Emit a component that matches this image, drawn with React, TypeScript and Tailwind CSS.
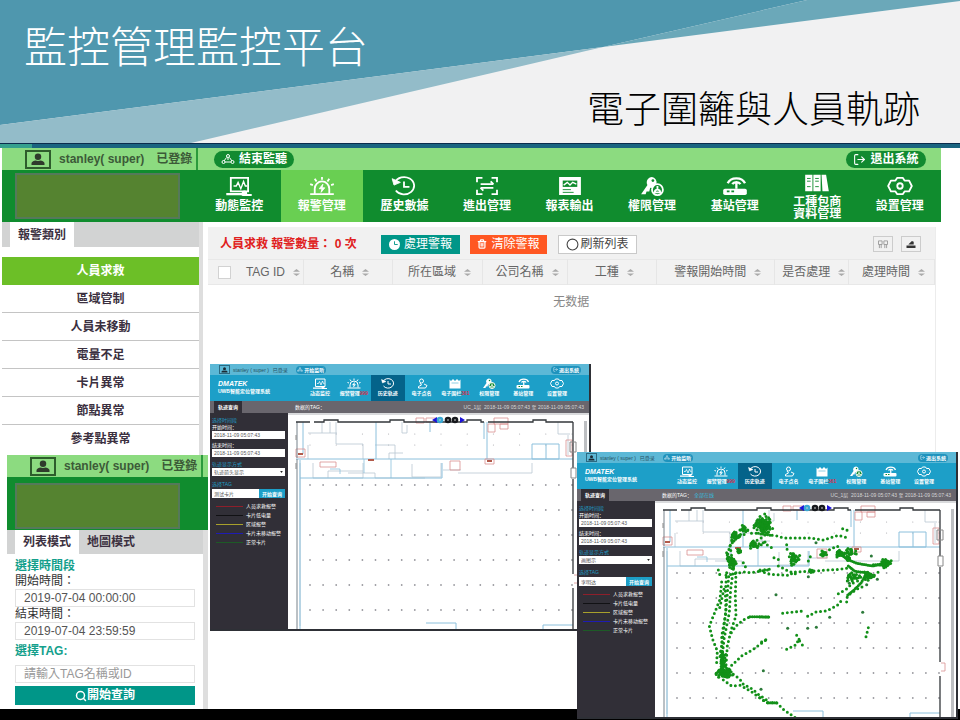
import React, { useId } from "react";
import { LogOut, Trash2, Search, Circle } from "lucide-react";

const FONT = "font-['Liberation_Sans','Noto_Sans_CJK_TC',sans-serif]";
const FONT_SC = "font-['Liberation_Sans','Noto_Sans_CJK_SC',sans-serif]";

type IconProps = { className?: string };

function Svg({ className, children }: IconProps & { children: React.ReactNode }) {
  return (
    <svg viewBox="0 0 28 22" className={className} fill="none" stroke="currentColor" strokeWidth="2" aria-hidden="true">
      {children}
    </svg>
  );
}

const MonitorIcon = ({ className }: IconProps) => (
  <Svg className={className}>
    <path d="M5 17V2h19v15z" />
    <path d="M8 11h3l2-4 3 7 3-8 2 5h2" strokeWidth="1.5" />
    <path d="M0 20h17l2 1h9" strokeWidth="2.5" />
    <circle cx="20" cy="19" r="2" fill="currentColor" />
  </Svg>
);
const AlarmIcon = ({ className }: IconProps) => (
  <Svg className={className}>
    <path d="M1 20h26M6 19v-5a8 8 0 0 1 16 0v5M14 1v3M6 3l2 3M22 3l-2 3M1 9l3 1M27 9l-3 1" />
    <path d="M15 9l-4 5h3l-1 4 4-5h-3z" fill="currentColor" strokeWidth="1" />
  </Svg>
);
const HistoryIcon = ({ className }: IconProps) => (
  <Svg className={className}>
    <path d="M4 7a11 9.500 0 1 1 1 9" />
    <path d="M1 3l2 7 7-3z" fill="currentColor" strokeWidth="1" />
    <path d="M14 6v6h6" />
  </Svg>
);
const ScanIcon = ({ className }: IconProps) => (
  <Svg className={className}>
    <path d="M3 7V2h6M19 2h6v5M25 15v5h-6M9 20H3v-5M7 9h14M7 13h14" />
    <path d="M18 6l3 3M10 16l-3-3" />
  </Svg>
);
const ReportIcon = ({ className }: IconProps) => (
  <Svg className={className}>
    <path d="M3 2h22v18H3z" fill="currentColor" />
    <path d="M6 5h16v7H6z" fill="#108c2e" stroke="none" />
    <path d="M7 10l4-3 3 3 3-3 4 2" strokeWidth="1.5" />
    <path d="M6 15h9M6 18h12" stroke="#108c2e" strokeWidth="1" />
  </Svg>
);
const KeyIcon = ({ className }: IconProps) => (
  <Svg className={className}>
    <path d="M14 1a6 6 0 0 0-5 9l-7 10h5l1-3h3l1-4a6 6 0 1 0 2-12z" fill="currentColor" stroke="none" />
    <circle cx="15" cy="5" r="1.5" fill="#108c2e" stroke="none" />
    <circle cx="20" cy="15" r="6" fill="#108c2e" />
    <path d="M20 11v3M17 18c0-4 6-4 6 0z" />
  </Svg>
);
const RouterIcon = ({ className }: IconProps) => (
  <Svg className={className}>
    <rect x="1" y="14" width="26" height="7" rx="2" fill="currentColor" stroke="none" />
    <path d="M6 8a10 8 0 0 1 19 0M11 9a5 4 0 0 1 9 0M15.500 8v6" strokeWidth="2.500" />
    <path d="M5 17h3M10 17h3" stroke="#108c2e" />
  </Svg>
);
const BooksIcon = ({ className }: IconProps) => (
  <Svg className={className}>
    <path d="M1 2h8v18H1zM10 2h8v18h-8zM19 2h5l3 18h-7z" fill="currentColor" stroke="none" />
    <path d="M3 6h4M3 9h4M3 15h4M12 6h4M12 9h4M12 15h4" stroke="#108c2e" strokeWidth="1" />
  </Svg>
);
const GearIcon = ({ className }: IconProps) => (
  <Svg className={className}>
    <path d="M11 2h6l2 3h5l3 6-3 6h-5l-2 3h-6l-2-3H4l-3-6 3-6h5z" strokeLinejoin="round" />
    <circle cx="14" cy="11" r="3" />
  </Svg>
);
const PersonIcon = ({ className }: IconProps) => (
  <Svg className={className}>
    <circle cx="13" cy="6" r="4" />
    <path d="M10 10l3 4-6 3v3h14l3-5-6-3" />
  </Svg>
);
const FenceIcon = ({ className }: IconProps) => (
  <Svg className={className}>
    <path d="M3 3l3 3 4-4 4 4 4-4 4 4 3-3v18H3z" fill="currentColor" stroke="none" />
    <path d="M7 10h14" stroke="#1d9cc4" strokeWidth="1" />
  </Svg>
);
const NodesIcon = ({ className }: IconProps) => (
  <Svg className={className}>
    <path d="M14 8v5M11 8l-5 7M17 8l5 7M8 17h12" />
    <circle cx="14" cy="5" r="3" />
    <circle cx="5" cy="17" r="3" />
    <circle cx="23" cy="17" r="3" />
  </Svg>
);
const AvatarIcon = ({ className }: IconProps) => (
  <svg viewBox="0 0 16 14" className={className} fill="currentColor" aria-hidden="true">
    <ellipse cx="8" cy="4" rx="3.500" ry="3.500" />
    <path d="M1 13v-2q0-2 4-3q3 1 6 0q4 1 4 3v2z" />
  </svg>
);

function UserBar() {
  return (
    <div className="flex h-full items-center whitespace-nowrap text-xs font-bold text-[#3c5a38]">
      <span className="flex h-[19px] w-[26px] items-center justify-center border-2 border-[#2e5d2c] text-[#2f3b2c]">
        <AvatarIcon className="h-[13px] w-4" />
      </span>
      <span className="ml-2">stanley( super)</span>
      <span className="ml-3">已登錄</span>
    </div>
  );
}

const NAV = [
  { icon: MonitorIcon, label: "動態監控" },
  { icon: AlarmIcon, label: "報警管理", active: true },
  { icon: HistoryIcon, label: "歷史數據" },
  { icon: ScanIcon, label: "進出管理" },
  { icon: ReportIcon, label: "報表輸出" },
  { icon: KeyIcon, label: "權限管理" },
  { icon: RouterIcon, label: "基站管理" },
  { icon: BooksIcon, label: "工種包商\n資料管理" },
  { icon: GearIcon, label: "設置管理" },
];

function Banner() {
  return (
    <header className="relative h-[143px] overflow-hidden bg-[#f1f1f2]">
      <svg viewBox="0 0 960 143" preserveAspectRatio="none" className="absolute inset-0 size-full" aria-hidden="true">
        <path d="M0 0H807L603 47L0 125z" fill="#4f97ae" />
        <path d="M0 125L603 47L191 143H0z" fill="#93bcc9" />
        <path d="M807 0H960V1L603 47z" fill="#6ba8b9" />
      </svg>
      <div className={`relative flex flex-col font-light ${FONT}`}>
        <h1 className="mt-[18px] ml-6 text-[43px] leading-[60px] text-white">監控管理監控平台</h1>
        <h2 className="mt-[7px] mr-10 text-right text-[37px] leading-[52px] text-black">電子圍籬與人員軌跡</h2>
      </div>
    </header>
  );
}

function TopBar() {
  return (
    <div>
      <div className="flex h-[22px] items-center bg-[#8cdb80] pr-[15px]">
        <div className="h-full w-[196px] border-r-2 border-[#2b9a3c] pl-[23px]">
          <UserBar />
        </div>
        <button type="button" className="ml-4 flex h-[17px] w-20 items-center justify-center gap-1 rounded-full bg-[#128a30] text-xs leading-none font-bold text-white">
          <NodesIcon className="h-3 w-[14px]" />
          結束監聽
        </button>
        <button type="button" className="ml-auto flex h-[17px] w-20 items-center justify-center gap-1 rounded-full bg-[#128a30] text-xs leading-none font-bold text-white">
          <LogOut className="size-[13px]" aria-hidden="true" />
          退出系統
        </button>
      </div>
      <nav className="flex h-[52px] bg-[#108c2e]">
        <div className="w-[196px] shrink-0 pt-[3px] pl-[13px]">
          <div className="h-[46px] w-[165px] border-2 border-[#55795a] bg-[#558330]" />
        </div>
        {NAV.map(({ icon: Icon, label, active }) => (
          <button
            key={label}
            type="button"
            className={`flex flex-1 flex-col items-center text-xs font-bold whitespace-pre text-white ${active ? "bg-[#69cf52]" : ""} ${
              label.includes("\n") ? "gap-[3px] pt-[3px] leading-3" : "gap-[3px] pt-[6px] leading-[15px]"
            }`}
          >
            <Icon className="h-5 w-7 shrink-0" />
            {label}
          </button>
        ))}
      </nav>
    </div>
  );
}

const CATEGORIES = ["人員求救", "區域管制", "人員未移動", "電量不足", "卡片異常", "節點異常", "參考點異常"];

function CategoryPanel() {
  return (
    <aside className="mr-[5px] ml-[2px] border-r-4 border-[#dedede] bg-white pb-[2px]">
      <div className="flex h-[25px] bg-[#d2d3d3]">
        <h3 className="ml-2 flex w-16 items-center justify-center bg-white text-xs font-bold text-[#3b3040]">報警類別</h3>
      </div>
      <ul className="mt-[10px]">
        {CATEGORIES.map((name, i) => (
          <li key={name}>
            <button
              type="button"
              className={`h-[28px] w-full text-xs font-bold ${
                i === 0 ? "bg-[#6cbf27] text-white" : "border-b text-[#3b3040]"
              } ${i === CATEGORIES.length - 1 ? "border-transparent" : "border-[#c4c4c4]"}`}
            >
              {name}
            </button>
          </li>
        ))}
      </ul>
    </aside>
  );
}

const FIELD = "h-[18px] w-full border border-[#e2e2e2] bg-white px-2 text-xs text-[#555] outline-none";

function QueryPanel() {
  return (
    <section className="ml-[7px] bg-[#dedede]">
      <div className="-mr-[2px] h-[22px] bg-[#8cdb80]">
        <div className="h-full w-[196px] border-r-2 border-[#2b9a3c] pl-[23px]">
          <UserBar />
        </div>
      </div>
      <div className="-mr-[2px] h-[53px] bg-[#108c2e] pt-[6px] pl-2">
        <div className="h-[46px] w-[165px] border-2 border-[#55795a] bg-[#558330]" />
      </div>
      <div className="mr-[5px] flex h-6 bg-[#d2d3d3] pl-2 text-xs font-bold text-[#3b3040]">
        <button type="button" className="w-16 bg-white">列表模式</button>
        <button type="button" className="w-16">地圖模式</button>
      </div>
      <form className="mr-[5px] flex flex-col bg-white px-2 pt-[5px] pb-1 text-xs leading-[15px]" onSubmit={(e) => e.preventDefault()}>
        <h4 className="font-bold text-[#14a08c]">選擇時間段</h4>
        <label htmlFor="from" className="text-[#333]">開始時間：</label>
        <input id="from" className={FIELD} defaultValue="2019-07-04 00:00:00" />
        <label htmlFor="to" className="text-[#333]">結束時間：</label>
        <input id="to" className={FIELD} defaultValue="2019-07-04 23:59:59" />
        <label htmlFor="tag" className="mt-1 mb-[6px] font-bold text-[#14a08c]">選擇TAG:</label>
        <input id="tag" className={`${FIELD} placeholder:text-[#999]`} placeholder="請輸入TAG名稱或ID" />
        <button type="submit" className="mt-[3px] flex h-[19px] items-center justify-center bg-[#009688] font-bold text-white">
          <Search className="size-3" strokeWidth={3} aria-hidden="true" />
          開始查詢
        </button>
      </form>
    </section>
  );
}

const COLUMNS = [
  { label: "TAG ID", width: "w-[8.8%]" },
  { label: "名稱", width: "w-[12.3%]" },
  { label: "所在區域", width: "w-[12.4%]" },
  { label: "公司名稱", width: "w-[11.7%]" },
  { label: "工種", width: "w-[12.3%]" },
  { label: "警報開始時間", width: "w-[16.2%]" },
  { label: "是否處理", width: "w-[10.2%]" },
  { label: "處理時間", width: "w-[11.8%]" },
];

function AlarmPanel() {
  return (
    <section className="mt-[5px] mr-[5px] min-w-0 flex-1 self-stretch border-r border-[#ececec] bg-white">
      <div className="flex h-8 items-center bg-[#f1f1f1] pt-[2px] pr-[14px] pl-3 text-xs">
        <p className="w-[161px] font-bold whitespace-nowrap text-[#e02020]">人員求救 報警數量： 0 次</p>
        <button type="button" className="flex h-[19px] w-[79px] items-center justify-center gap-1 bg-[#009688] text-white">
          <svg viewBox="0 0 12 12" className="size-[11px]" aria-hidden="true">
            <circle cx="6" cy="6" r="6" fill="white" />
            <path d="M6 2.500V6H9.500" fill="none" stroke="#009688" />
          </svg>
          處理警報
        </button>
        <button type="button" className="ml-[10px] flex h-[19px] w-[77px] items-center justify-center gap-1 bg-[#ff5722] text-white">
          <Trash2 className="size-[10px]" strokeWidth={3} aria-hidden="true" />
          清除警報
        </button>
        <button type="button" className="ml-[11px] flex h-[19px] w-[79px] items-center justify-center gap-px border border-[#c9c9c9] bg-white text-[#444]">
          <Circle className="size-[13px]" aria-hidden="true" />
          刷新列表
        </button>
        <button type="button" aria-label="欄位" className="ml-auto flex h-4 w-5 items-center justify-center border border-[#ccc] text-[#999]">
          <svg viewBox="0 0 12 10" className="h-[9px] w-3" fill="none" stroke="currentColor" aria-hidden="true">
            <path d="M1 1h4v4H1zM7 1h4v4H7zM2 5v4M4 5v4M8 5v4M10 5v4" />
          </svg>
        </button>
        <button type="button" aria-label="匯出" className="ml-2 flex h-4 w-5 items-center justify-center border border-[#ccc] text-[#333]">
          <svg viewBox="0 0 12 10" className="h-[9px] w-3" fill="currentColor" aria-hidden="true">
            <path d="M1 6h10v3H1zM3 5l4-4 2 1v3z" />
          </svg>
        </button>
      </div>
      <table className="w-full table-fixed border-collapse text-xs text-[#666]">
        <thead>
          <tr className="h-[25px] border-y border-[#e8e8e8] bg-[#f2f2f2]">
            <th className="w-[4.3%] pl-[10px] text-left">
              <input type="checkbox" aria-label="全選" className="block size-[13px] appearance-none border border-[#d2d2d2] bg-white" />
            </th>
            {COLUMNS.map((c) => (
              <th key={c.label} className={`${c.width} border-r border-[#e6e6e6] p-0 font-normal`}>
                <span className="flex items-center justify-center gap-2 pl-1 whitespace-nowrap">
                  {c.label}
                  <svg viewBox="0 0 8 8" className="size-[7px]" fill="#aaa" aria-hidden="true">
                    <path d="M0 3L4 0L8 3zM0 5L4 8L8 5z" />
                  </svg>
                </span>
              </th>
            ))}
          </tr>
        </thead>
        <tbody>
          <tr>
            <td colSpan={9} className={`h-[34px] text-center text-[#888] ${FONT_SC}`}>无数据</td>
          </tr>
        </tbody>
      </table>
    </section>
  );
}

/* ---------- floor map ---------- */

const GRID_X = Array.from({ length: 21 }, (_, i) => 22 + i * 13.1);
const GRID_Y = [72, 97, 122, 147, 172, 197];

function FloorPlan() {
  return (
    <g fill="none" strokeWidth="1">
      <g fill="#9a9aa0">
        {GRID_Y.map((y) => GRID_X.map((x) => <circle key={`${x}-${y}`} cx={x} cy={y} r="0.9" />))}
        {[21, 32].map((y) => GRID_X.filter((_, i) => i % 2 === 0).map((x) => <circle key={`${x}-${y}`} cx={x} cy={y} r="0.5" />))}
      </g>
      <g stroke="#b9c6d2" strokeWidth="0.8">
        <path d="M48 9v22h27v15M20 20h29M34 9v11M42 9v11M20 32v14M87 32h20V46M101 46v-6h14M114 9v11h5v-8" />
        <path d="M12 50v163M25 50v15h50V50M40 65v-7h35M60 60h27v5h50M124 51v13h29V50M170 60h74V50M155 57h18" />
        <path d="M270 9v12h12M280 22v20" />
      </g>
      <g stroke="#8cc0dc">
        <path d="M8 46H285M12 47V216M88 9v37M15 9v32M196 9v17M199 9v37M244 31v15h27V31zM258 31v15M142 9v10M12 65h142V50M138 210h30v8M255 216v-4h30" />
        <path d="M42 56h10v5M76 46v14M103 46v19" strokeWidth="0.8" />
      </g>
      <g stroke="#d98f8f" strokeWidth="0.8">
        <path d="M8 36h9v8H8zM32 49h16v5H32zM128 5h8v5h-8zM138 5h10v4h-10zM200 11h7v8h-7zM206 5h14v6h-14zM212 11h8v5h-8zM278 27h6v16h-6zM197 46h9v5h-9zM162 48h10v9h-10z" />
        <path d="M10 41h5M80 47h6M199 48h5" stroke="#b25a4a" strokeWidth="2" />
        <path d="M286 162h4v8h-4" />
      </g>
      <path d="M9 9v36M9 46V217" stroke="#77828b" />
      <path d="M8 9h14M26 9h10V7h14v2h52V7h14v2h63V7h14v2h3M200 9h45V7h13v2h27M285 9v46M285 66v95M285 175v42" stroke="#33373b" strokeWidth="1.3" />
      <path d="M8 22v5M8 50v6M282 29h6v10h-6zM283 55h5v10h-5z" stroke="#888" />
      <path d="M144 7l5-3v6zM177 7l-5-3v6z" fill="#1c12d8" stroke="none" />
      <circle cx="152" cy="7" r="3.300" fill="#39a8d4" stroke="none" />
      <circle cx="160" cy="7" r="3.300" fill="#16181c" stroke="none" />
      <circle cx="167" cy="7" r="3.300" fill="#16181c" stroke="none" />
      <path d="M151 7h2M159 7h2M166 7h2" stroke="#ccc" />
    </g>
  );
}

type Cluster = [cx: number, cy: number, rx: number, ry: number, n: number];

function scatter([cx, cy, rx, ry, n]: Cluster) {
  return Array.from({ length: n }, (_, i) => {
    const r = Math.sqrt((i + 0.5) / n);
    const a = i * 2.4;
    const wobble = 0.8 + 0.3 * Math.sin(i * 7.3);
    return [cx + rx * r * Math.cos(a) * wobble, cy + ry * r * Math.sin(a) * wobble];
  });
}

const WEST_TRACKS = [
  "M600 268L560 262L545 262L520 245L495 262L485 285L474 320L470 350",
  "M595 258L575 275L545 292L560 306L590 285",
  "M520 245L530 262L500 275",
  "M480 300L485 330L495 345L490 370",
  "M445 372L450 388",
  "M468 388L520 378L545 380L600 371",
  "M470 380L466 440L468 500L455 570L458 640L462 680",
  "M490 370L482 430L478 500L462 580L456 640L465 680",
  "M498 380L496 450L498 510L484 550L472 600L468 660",
  "M476 392L470 470L460 560L452 620L456 670",
  "M455 408L450 460L432 505L418 540L428 580L442 615L440 650",
  "M462 430L448 490",
  "M484 560L498 540L520 522L540 512",
  "M485 658L515 630L550 610L592 579",
  "M490 685L510 700L520 715L548 730L565 745L590 762",
  "M460 702L485 720L512 718L545 738L575 760L600 775",
  "M520 350L528 366",
];
const WEST_DENSE = ["M540 512L600 513", "M487 290L515 262", "M470 320L478 350", "M552 245L580 220"];
const WEST_CLUSTERS: Cluster[] = [
  [580, 235, 28, 30, 64], [463, 680, 26, 17, 70], [508, 316, 10, 7, 8], [552, 296, 18, 13, 18],
  [495, 270, 16, 14, 18], [486, 350, 14, 22, 26], [458, 640, 10, 34, 30], [522, 248, 12, 12, 10],
];
const EAST_TRACKS = [
  "M-5 262L50 270L70 276L150 276L190 282L235 268L262 275",
  "M248 248L272 257",
  "M10 290L35 305", "M42 335L62 343", "M145 345L152 330", "M80 296L82 318",
  "M188 330L200 316L230 300L245 308",
  "M0 375L30 385L90 388L100 378L160 375L240 370L270 365",
  "M55 360L85 375L110 385", "M0 372L30 370",
  "M235 443L262 428L275 413L300 402", "M262 405L290 395L340 390L355 378",
  "M68 502L130 495", "M143 511L170 497L200 495L232 478L245 463",
  "M260 468L262 450L290 430L312 420", "M325 545L316 580", "M5 588L22 579",
  "M80 610L110 595L115 580L128 598", "M110 568L120 585", "M0 755L20 770L50 770L70 790L105 815", "M262 318L285 325L300 322",
];
const EAST_DENSE = [
  "M232 318L262 340L290 352L340 360L385 348", "M265 360L285 376L320 380L304 410L280 434L262 448", "M25 770L50 770",
  "M232 330L250 318", "M340 356L385 358",
];
const EAST_CLUSTERS: Cluster[] = [
  [14, 240, 18, 24, 30], [102, 338, 18, 22, 30], [190, 323, 10, 10, 10], [240, 323, 16, 12, 18],
  [378, 351, 16, 15, 28], [278, 392, 26, 14, 20], [325, 390, 18, 15, 24], [270, 318, 18, 16, 14], [155, 376, 12, 5, 8], [265, 338, 10, 8, 8],
];
const EAST_POINTS = [
  [48, 446], [308, 499], [209, 514], [83, 547], [143, 547], [169, 544], [168, 290], [334, 330],
  [10, 674], [352, 400], [145, 392], [268, 412], [320, 416], [3, 730],
];

const dot = ([x, y]: number[], i: number) => <path key={i} d={`M${x} ${y}h.1`} />;

function Tracks() {
  return (
    <g stroke="#129018" fill="none" strokeLinecap="round" strokeWidth="9">
      <g transform="translate(-85 -55) scale(0.3333)">
        {WEST_TRACKS.map((d) => <path key={d} d={d} strokeDasharray="0 14" />)}
        {WEST_DENSE.map((d) => <path key={d} d={d} strokeDasharray="0 7" />)}
        {WEST_CLUSTERS.flatMap(scatter).map(dot)}
      </g>
      <g transform="translate(105 -55) scale(0.3333)">
        {EAST_TRACKS.map((d) => <path key={d} d={d} strokeDasharray="0 14" />)}
        {EAST_DENSE.map((d) => <path key={d} d={d} strokeDasharray="0 6" />)}
        <path d="M0 513H32" strokeDasharray="0 8" />
        {EAST_CLUSTERS.flatMap(scatter).map(dot)}
        <g stroke="#2c7a3a">{EAST_POINTS.map(dot)}</g>
      </g>
    </g>
  );
}

/* ---------- tracking windows ---------- */

const MINI_NAV = [
  { icon: MonitorIcon, label: "动态监控" },
  { icon: AlarmIcon, label: "报警管理", badge: "999" },
  { icon: HistoryIcon, label: "历史轨迹", active: true },
  { icon: PersonIcon, label: "电子点名" },
  { icon: FenceIcon, label: "电子围栏", badge: "361" },
  { icon: KeyIcon, label: "权限管理" },
  { icon: RouterIcon, label: "基站管理" },
  { icon: GearIcon, label: "设置管理" },
];

const LEGEND = [
  { label: "人员求救报警", color: "bg-[#8e1f2b]" },
  { label: "卡片低电量", color: "bg-[#111114]" },
  { label: "区域报警", color: "bg-[#a8a02c]" },
  { label: "卡片未移动报警", color: "bg-[#1f1cb4]" },
  { label: "正常卡片", color: "bg-[#1d5a26]" },
];

const MINI_FIELD = "h-2 w-full bg-white px-[2px] text-[5px] leading-none text-[#555] outline-none";

type TrackWindowProps = { place: string; tag?: string; mode: string; card: string; tracks?: boolean };

function TrackWindow({ place, tag, mode, card, tracks }: TrackWindowProps) {
  const id = useId();
  return (
    <section className={`absolute ${place} flex h-[267px] w-[381px] flex-col border-r-2 border-b-2 border-[#2e3036] bg-[#312f37] text-[5px] leading-[6px] text-white ${FONT_SC}`}>
      <div className="flex h-[11px] shrink-0 items-center bg-[#5cb8d6] pr-2 pl-[9px] text-[#27505f]">
        <span className="flex h-[9px] w-[11px] items-center justify-center border border-[#2c6a82] text-[#1c2a33]">
          <AvatarIcon className="h-[6px] w-[7px]" />
        </span>
        <span className="ml-[3px]">stanley ( super )</span>
        <span className="ml-1">已登录</span>
        <button type="button" className="ml-2 flex h-2 w-[30px] items-center justify-center gap-px rounded-full bg-[#1f93bd] font-bold text-white">
          <NodesIcon className="h-[5px] w-[6px]" />
          开始监听
        </button>
        <button type="button" className="ml-auto flex h-2 w-[30px] items-center justify-center gap-px rounded-full bg-[#1f93bd] font-bold text-white">
          <LogOut className="size-[5px]" aria-hidden="true" />
          退出系统
        </button>
      </div>
      <div className="flex h-[26px] shrink-0 bg-[#1d9fc8] pr-[15px]">
        <div className="w-[93px] pt-[5px] pl-2 whitespace-nowrap">
          <p className="text-[7px] leading-[7px] font-bold italic">DMATEK</p>
          <p className="mt-px font-bold">UWB智能定位管理系统</p>
        </div>
        <nav className="flex flex-1">
          {MINI_NAV.map(({ icon: Icon, label, active, badge }) => (
            <button
              key={label}
              type="button"
              className={`flex flex-1 flex-col items-center gap-px pt-[3px] font-bold whitespace-nowrap ${active ? "bg-[#04638a]" : ""}`}
            >
              <Icon className="h-[11px] w-[14px] shrink-0" />
              <span>
                {label}
                {badge && <span className="text-[#d3304a]">{badge}</span>}
              </span>
            </button>
          ))}
        </nav>
      </div>
      <div className="flex h-3 shrink-0 items-center bg-[#69666d] pr-[5px]">
        <span className="ml-1 flex h-full w-[28px] items-center justify-center bg-[#312f37] font-bold">轨迹查询</span>
        <span className="ml-[53px]">数据的TAG：</span>
        {tag && <span className="ml-[2px] text-[#39b8dc]">{tag}</span>}
        <span className="ml-auto text-[#d6d6d8]">UC_1层&nbsp; 2018-11-09 05:07:43 至 2018-11-09 05:07:43</span>
      </div>
      <div className="flex min-h-0 flex-1">
        <form className="flex w-[78px] shrink-0 flex-col pt-1 pr-[3px] pl-[2px]" onSubmit={(e) => e.preventDefault()}>
          <h4 className="text-[#1f9cc4]">选择时间段</h4>
          <label htmlFor={`${id}a`} className="my-px">开始时间：</label>
          <input id={`${id}a`} className={MINI_FIELD} defaultValue="2018-11-09 05:07:43" />
          <label htmlFor={`${id}b`} className="mt-[3px] mb-px">结束时间：</label>
          <input id={`${id}b`} className={MINI_FIELD} defaultValue="2018-11-09 05:07:43" />
          <label htmlFor={`${id}c`} className="mt-1 mb-px text-[#1f9cc4]">轨迹显示方式</label>
          <div className="flex items-center bg-white pr-[2px]">
            <select id={`${id}c`} className={`${MINI_FIELD} appearance-none`}>
              <option>{mode}</option>
            </select>
            <svg viewBox="0 0 4 3" className="h-[2px] w-[3px] shrink-0" fill="#222" aria-hidden="true">
              <path d="M0 0h4L2 3z" />
            </svg>
          </div>
          <label htmlFor={`${id}d`} className="mt-[5px] mb-[2px] text-[#1f9cc4]">选择TAG</label>
          <div className="flex">
            <input id={`${id}d`} className="h-[9px] w-[47px] bg-white px-[2px] text-[5px] text-[#555] outline-none" defaultValue={card} />
            <button type="submit" className="h-[9px] flex-1 bg-[#1d9fc8] font-bold">开始查询</button>
          </div>
          <ul className="mt-[3px] flex flex-col gap-[3px] pt-[2px] pl-1">
            {LEGEND.map((l) => (
              <li key={l.label} className="flex items-center gap-[3px] whitespace-nowrap">
                <span className={`h-px w-[27px] ${l.color}`} />
                {l.label}
              </li>
            ))}
          </ul>
        </form>
        <div className="flex flex-1 border-t-2 border-[#d9dadc] bg-white pr-[2px]">
          <svg viewBox="0 2 295 214" className="h-full w-[295px] shrink-0" role="img" aria-label="平面图">
            <FloorPlan />
            {tracks && <Tracks />}
          </svg>
          <div className="mt-[6px] ml-auto w-[3px] bg-[#bdbfc2]" />
        </div>
      </div>
    </section>
  );
}

export default function App() {
  return (
    <div className={`relative flex min-h-screen flex-col overflow-hidden bg-white ${FONT}`}>
      <Banner />
      <div className="flex h-[5px] border-t border-[#0b2c4c] bg-[#1a6480]">
        <div className="w-8 bg-[#35a08e]" />
      </div>
      <main className="flex flex-1 flex-col">
        <div className="mr-[19px] ml-[2px]">
          <TopBar />
        </div>
        <div className="mr-[19px] flex flex-1">
          <div className="flex w-[208px] shrink-0 flex-col">
            <CategoryPanel />
            <QueryPanel />
          </div>
          <AlarmPanel />
        </div>
      </main>
      <footer className="h-[11px] bg-black" />
      <TrackWindow place="top-[364px] left-[210px]" mode="轨迹箭头显示" card="测试卡片" />
      <TrackWindow place="top-[452px] left-[577px]" mode="画图示" card="李明达" tag="全部在线" tracks />
    </div>
  );
}
